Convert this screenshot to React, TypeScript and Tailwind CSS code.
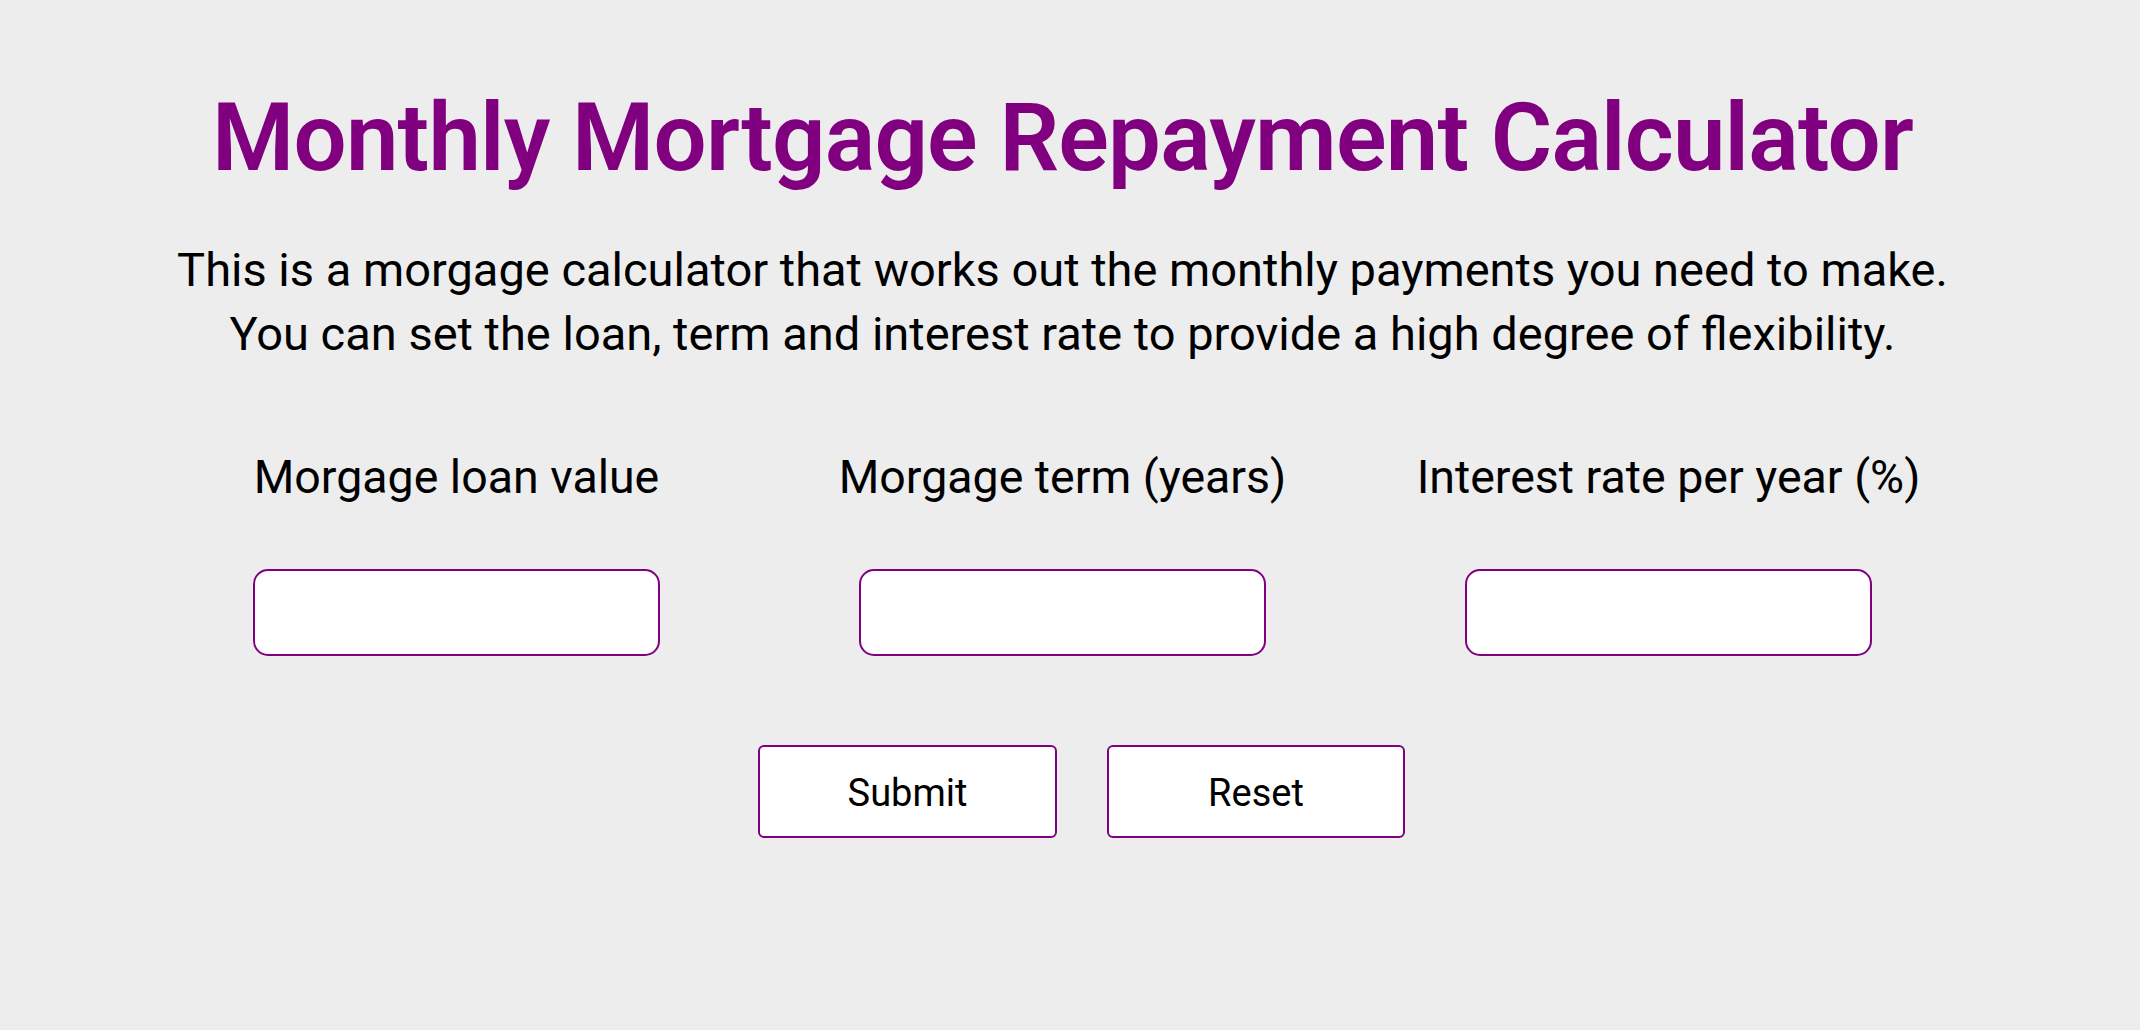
import { useState } from "react";

const fields = [
  { id: "loan", label: "Morgage loan value" },
  { id: "term", label: "Morgage term (years)" },
  { id: "rate", label: "Interest rate per year (%)" },
];

export default function App() {
  const [values, setValues] = useState<Record<string, string>>({
    loan: "",
    term: "",
    rate: "",
  });

  const handleReset = () => setValues({ loan: "", term: "", rate: "" });

  return (
    <div className="min-h-screen bg-[#ededed] pr-[15px] font-['Roboto',sans-serif] text-black">
      <main className="flex flex-col items-center pt-[91px]">
        {/* Title */}
        <h1 className="text-[94px] font-semibold leading-none tracking-[-0.8px] text-[#800080]">
          Monthly Mortgage Repayment Calculator
        </h1>

        {/* Intro */}
        <p className="mt-[53px] text-center text-[47px] leading-[64px]">
          This is a morgage calculator that works out the monthly payments you need to make.
          <br />
          You can set the loan, term and interest rate to provide a high degree of flexibility.
        </p>

        {/* Inputs */}
        <div className="mt-[88px] grid grid-cols-3">
          {fields.map((f) => (
            <div key={f.id} className="flex w-[606px] flex-col items-center">
              <label htmlFor={f.id} className="text-[46.5px] leading-none">
                {f.label}
              </label>
              <input
                id={f.id}
                type="text"
                value={values[f.id]}
                onChange={(e) => setValues({ ...values, [f.id]: e.target.value })}
                className="mt-[68px] h-[87px] w-[407px] rounded-[15px] border-2 border-[#800080] bg-white px-4 text-[38px] outline-none"
              />
            </div>
          ))}
        </div>

        {/* Actions */}
        <div className="mt-[89px] flex gap-[50px] pl-[38px]">
          <button className="h-[93px] w-[299px] rounded-[6px] border-2 border-[#800080] bg-white pt-1 text-[38px]">
            Submit
          </button>
          <button
            onClick={handleReset}
            className="h-[93px] w-[298px] rounded-[6px] border-2 border-[#800080] bg-white pt-1 text-[38px]"
          >
            Reset
          </button>
        </div>
      </main>
    </div>
  );
}
